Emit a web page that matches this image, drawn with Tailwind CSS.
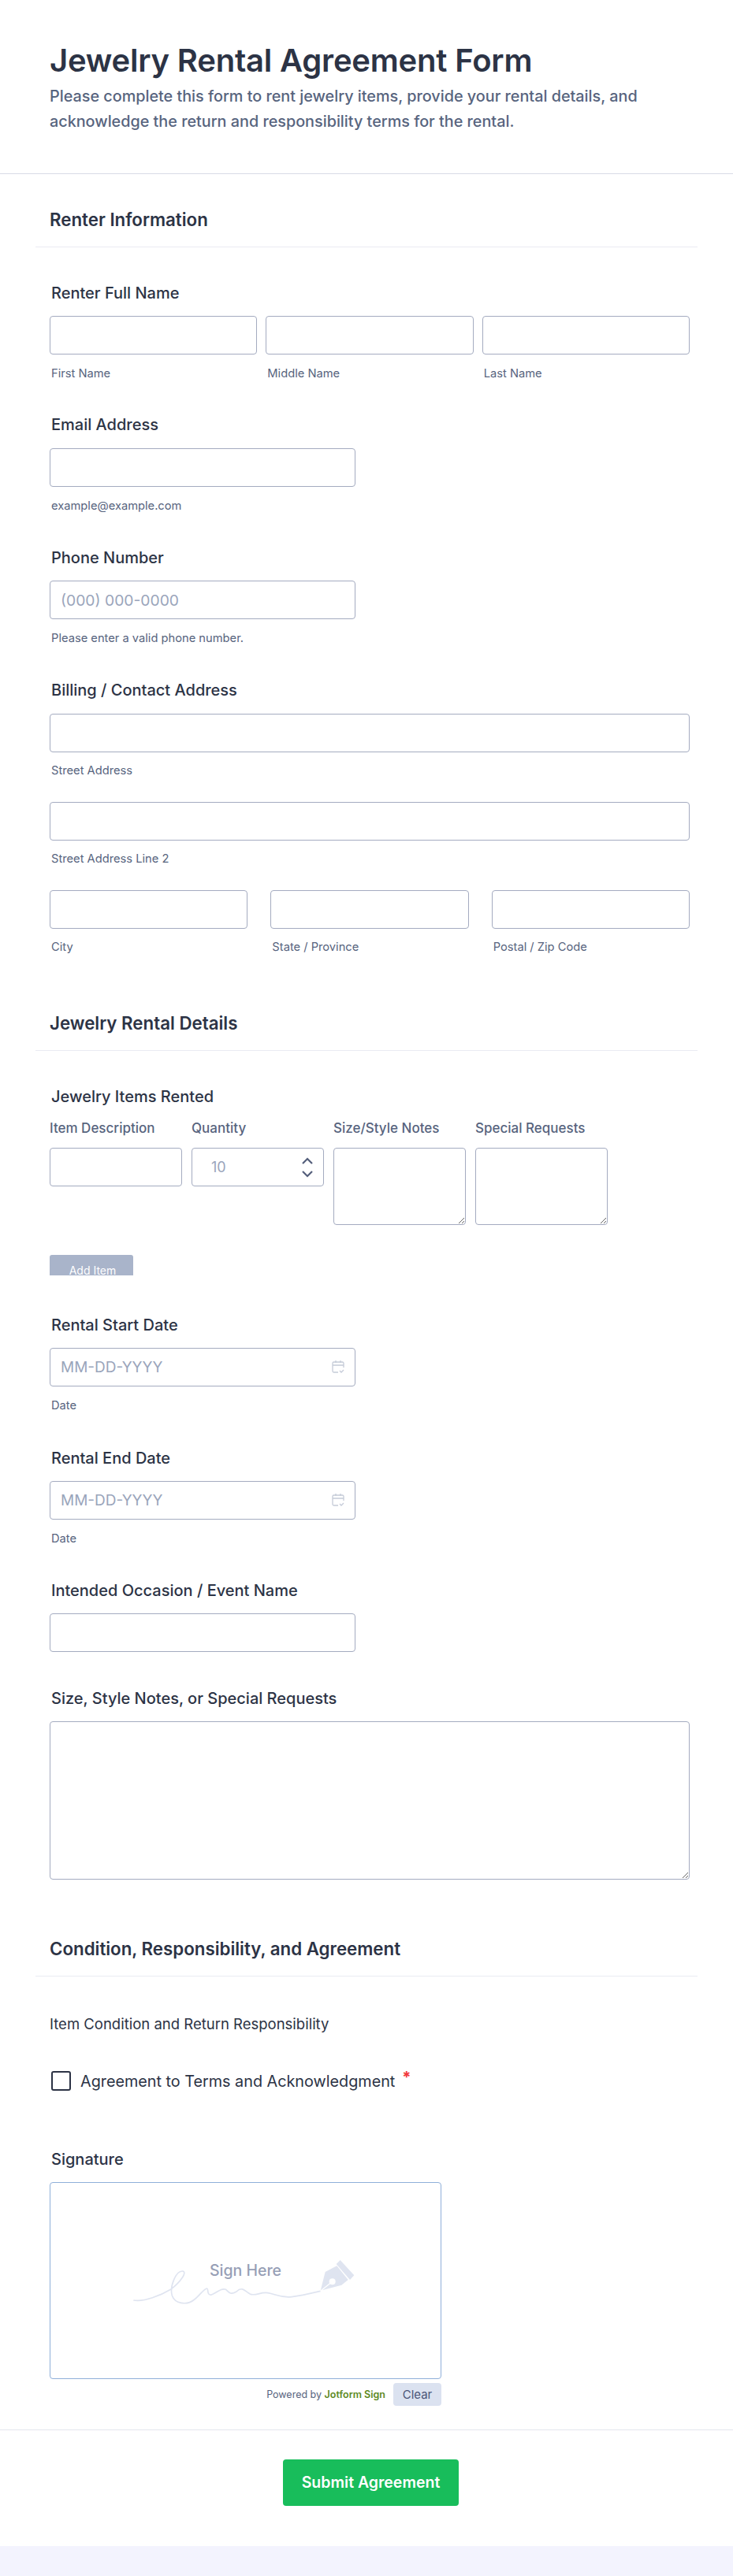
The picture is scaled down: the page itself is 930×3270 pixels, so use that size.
<!doctype html>
<html>
<head>
  <meta charset="UTF-8">
  <meta name="viewport" content="width=device-width, initial-scale=1.0">
  <script src="https://cdn.jsdelivr.net/npm/@tailwindcss/browser@4"></script>
</head>
<body class="bg-[#f3f3fe] font-['Inter',sans-serif] text-[#2c3345]">
  <div class="bg-white w-[930px] h-[3232px] overflow-hidden">

    <!-- form header -->
    <div class="h-[221px] border-b border-[#d8dbe6] pl-[63px] pt-[49px]">
      <h1 class="text-[40px] leading-[56px] font-semibold tracking-[-0.2px]">Jewelry Rental Agreement Form</h1>
      <p class="text-[19.8px] leading-[32px] font-medium text-[#57647e] mt-[1px]">Please complete this form to rent jewelry items, provide your rental details, and<br>acknowledge the return and responsibility terms for the rental.</p>
    </div>

    <!-- renter information -->
    <div class="mx-[45px] mt-[42px] h-[51px] pl-[18px] border-b border-[#eaebf2]">
      <h2 class="text-[22.3px] leading-[32px] font-semibold">Renter Information</h2>
    </div>

    <div class="pl-[63px] w-[875px]">
      <div class="mt-[46px] ml-[2px] text-[20px] leading-[24px] font-medium">Renter Full Name</div>
      <div class="mt-[17px] flex gap-[11px]">
        <div class="flex-1">
          <input class="w-full h-[49px] border border-[#a4abc0] rounded-[4px]">
          <div class="mt-[14px] ml-[2px] text-[14.7px] leading-[20px] text-[#57647e]">First Name</div>
        </div>
        <div class="flex-1">
          <input class="w-full h-[49px] border border-[#a4abc0] rounded-[4px]">
          <div class="mt-[14px] ml-[2px] text-[14.7px] leading-[20px] text-[#57647e]">Middle Name</div>
        </div>
        <div class="flex-1">
          <input class="w-full h-[49px] border border-[#a4abc0] rounded-[4px]">
          <div class="mt-[14px] ml-[2px] text-[14.7px] leading-[20px] text-[#57647e]">Last Name</div>
        </div>
      </div>

      <div class="mt-[43px] ml-[2px] text-[20px] leading-[24px] font-medium">Email Address</div>
      <input class="block mt-[18px] w-[388px] h-[49px] border border-[#a4abc0] rounded-[4px]">
      <div class="mt-[14px] ml-[2px] text-[14.7px] leading-[20px] text-[#57647e]">example@example.com</div>

      <div class="mt-[44px] ml-[2px] text-[20px] leading-[24px] font-medium">Phone Number</div>
      <input class="block mt-[17px] w-[388px] h-[49px] border border-[#a4abc0] rounded-[4px] px-[13px] text-[19.3px] placeholder:text-[#9aa5bb]" placeholder="(000) 000-0000">
      <div class="mt-[14px] ml-[2px] text-[14.7px] leading-[20px] text-[#57647e]">Please enter a valid phone number.</div>

      <div class="mt-[44px] ml-[2px] text-[20px] leading-[24px] font-medium">Billing / Contact Address</div>
      <input class="block mt-[18px] w-full h-[49px] border border-[#a4abc0] rounded-[4px]">
      <div class="mt-[13px] ml-[2px] text-[14.7px] leading-[20px] text-[#57647e]">Street Address</div>
      <input class="block mt-[30px] w-full h-[49px] border border-[#a4abc0] rounded-[4px]">
      <div class="mt-[13px] ml-[2px] text-[14.7px] leading-[20px] text-[#57647e]">Street Address Line 2</div>
      <div class="mt-[30px] flex gap-[29px]">
        <div class="flex-1">
          <input class="w-full h-[49px] border border-[#a4abc0] rounded-[4px]">
          <div class="mt-[13px] ml-[2px] text-[14.7px] leading-[20px] text-[#57647e]">City</div>
        </div>
        <div class="flex-1">
          <input class="w-full h-[49px] border border-[#a4abc0] rounded-[4px]">
          <div class="mt-[13px] ml-[2px] text-[14.7px] leading-[20px] text-[#57647e]">State / Province</div>
        </div>
        <div class="flex-1">
          <input class="w-full h-[49px] border border-[#a4abc0] rounded-[4px]">
          <div class="mt-[13px] ml-[2px] text-[14.7px] leading-[20px] text-[#57647e]">Postal / Zip Code</div>
        </div>
      </div>
    </div>

    <!-- jewelry rental details -->
    <div class="mx-[45px] mt-[71px] h-[51px] pl-[18px] border-b border-[#eaebf2]">
      <h2 class="text-[22.3px] leading-[32px] font-semibold">Jewelry Rental Details</h2>
    </div>

    <div class="pl-[63px] w-[875px]">
      <div class="mt-[46px] ml-[2px] text-[20px] leading-[24px] font-medium">Jewelry Items Rented</div>
      <div class="mt-[16px] flex gap-[12px] items-start">
        <div class="w-[168px]">
          <div class="text-[17px] leading-[24px] font-medium text-[#57647e]">Item Description</div>
          <input class="block mt-[13px] w-full h-[49px] border border-[#a4abc0] rounded-[4px]">
        </div>
        <div class="w-[168px]">
          <div class="text-[17px] leading-[24px] font-medium text-[#57647e]">Quantity</div>
          <div class="relative mt-[13px]">
            <input class="block w-full h-[49px] border border-[#a4abc0] rounded-[4px] pl-[24px] text-[18px] placeholder:text-[#9aa5bb]" placeholder="10">
            <svg class="absolute right-[13px] top-[12px]" width="16" height="26" viewBox="0 0 16 26" fill="none" stroke="#545f7b" stroke-width="2.2">
              <path d="M2 8l6-6 6 6"/>
              <path d="M2 18l6 6 6-6"/>
            </svg>
          </div>
        </div>
        <div class="w-[168px]">
          <div class="text-[17px] leading-[24px] font-medium text-[#57647e]">Size/Style Notes</div>
          <textarea class="block mt-[13px] w-full h-[98px] border border-[#a4abc0] rounded-[4px]"></textarea>
        </div>
        <div class="w-[168px]">
          <div class="text-[17px] leading-[24px] font-medium text-[#57647e]">Special Requests</div>
          <textarea class="block mt-[13px] w-full h-[98px] border border-[#a4abc0] rounded-[4px]"></textarea>
        </div>
      </div>
      <div class="mt-[38px] w-[106px] h-[26px] bg-[#a9b4ca] rounded-t-[3px] text-white text-[14px] leading-[12px] pt-[14px] pl-[3px] text-center">Add Item</div>

      <div class="mt-[51px] ml-[2px] text-[20px] leading-[24px] font-medium">Rental Start Date</div>
      <div class="relative mt-[17px] w-[388px]">
        <input class="block w-full h-[49px] border border-[#a4abc0] rounded-[4px] px-[13px] text-[19px] placeholder:text-[#9aa5bb]" placeholder="MM-DD-YYYY">
        <svg class="absolute right-[13px] top-[15px]" width="18" height="18" viewBox="0 0 18 18" fill="none" stroke="#c5cbd8" stroke-width="1.3">
          <path d="M16 10V4.500a1.500 1.500 0 0 0-1.500-1.500h-11A1.500 1.500 0 0 0 2 4.500v10A1.500 1.500 0 0 0 3.500 16H9"/>
          <path d="M2 7h14M6 1v3M12 1v3"/>
          <path d="M11 14l2 2 3-3"/>
        </svg>
      </div>
      <div class="mt-[14px] ml-[2px] text-[14.7px] leading-[20px] text-[#57647e]">Date</div>

      <div class="mt-[45px] ml-[2px] text-[20px] leading-[24px] font-medium">Rental End Date</div>
      <div class="relative mt-[17px] w-[388px]">
        <input class="block w-full h-[49px] border border-[#a4abc0] rounded-[4px] px-[13px] text-[19px] placeholder:text-[#9aa5bb]" placeholder="MM-DD-YYYY">
        <svg class="absolute right-[13px] top-[15px]" width="18" height="18" viewBox="0 0 18 18" fill="none" stroke="#c5cbd8" stroke-width="1.3">
          <path d="M16 10V4.500a1.500 1.500 0 0 0-1.500-1.500h-11A1.500 1.500 0 0 0 2 4.500v10A1.500 1.500 0 0 0 3.500 16H9"/>
          <path d="M2 7h14M6 1v3M12 1v3"/>
          <path d="M11 14l2 2 3-3"/>
        </svg>
      </div>
      <div class="mt-[14px] ml-[2px] text-[14.7px] leading-[20px] text-[#57647e]">Date</div>

      <div class="mt-[44px] ml-[2px] text-[20px] leading-[24px] font-medium">Intended Occasion / Event Name</div>
      <input class="block mt-[17px] w-[388px] h-[49px] border border-[#a4abc0] rounded-[4px]">

      <div class="mt-[47px] ml-[2px] text-[20px] leading-[24px] font-medium">Size, Style Notes, or Special Requests</div>
      <textarea class="block mt-[17px] w-full h-[201px] border border-[#a4abc0] rounded-[4px]"></textarea>
    </div>

    <!-- condition section -->
    <div class="mx-[45px] mt-[72px] h-[51px] pl-[18px] border-b border-[#eaebf2]">
      <h2 class="text-[22.3px] leading-[32px] font-semibold">Condition, Responsibility, and Agreement</h2>
    </div>

    <div class="pl-[63px] w-[875px]">
      <div class="mt-[48px] text-[18.500px] leading-[24px]">Item Condition and Return Responsibility</div>
      <div class="mt-[48px] ml-[2px] flex items-center gap-[12px]">
        <input type="checkbox" class="appearance-none w-[25px] h-[25px] border-2 border-[#2c3345] rounded-[3px]">
        <span class="text-[19.8px] leading-[24px]">Agreement to Terms and Acknowledgment</span>
        <span class="-ml-[3px] -mt-[10px] text-[20px] leading-[24px] font-bold text-[#f23a3c]">*</span>
      </div>
      <div class="mt-[75px] ml-[2px] text-[20px] leading-[24px] font-medium">Signature</div>
      <div class="relative mt-[17px] w-[497px] h-[250px] border border-[#8fafd9] rounded-[4px]">
        <div class="absolute left-0 right-0 top-[99px] text-center text-[19.500px] leading-[24px] font-medium text-[#979fb6]">Sign Here</div>
        <svg class="absolute left-[76px] top-[48px]" width="440" height="240" viewBox="0 0 1320 720" fill="none">
          <path d="M88 303C130 310 190 285 232 260C265 235 295 195 275 192C250 190 225 250 235 285C245 315 290 325 320 300C340 285 355 260 368 258C375 260 365 285 385 282C405 275 420 255 440 262C450 270 455 285 480 270C500 250 510 265 530 278C550 290 570 270 600 275C630 280 650 295 690 290C730 285 770 275 800 268" stroke="#dfe4f0" stroke-width="5"/>
          <path d="M800 266L818 195L862 172L905 225L880 245Z" fill="#dfe4f0"/>
          <path d="M875 150L928 208L912 225L860 165Z" fill="#dfe4f0"/>
          <circle cx="845" cy="232" r="12" fill="#fff"/>
          <path d="M800 268L845 232" stroke="#fff" stroke-width="4"/>
        </svg>
      </div>
      <div class="w-[497px] mt-[5px] flex items-center justify-end gap-[10px]">
        <span class="text-[12.500px] leading-[16px] text-[#57647e]">Powered by <span class="font-semibold text-[#5e8a1f]">Jotform Sign</span></span>
        <span class="w-[61px] h-[29px] rounded-[4px] bg-[#dbe2f0] text-[#4a5577] text-[15px] leading-[29px] text-center">Clear</span>
      </div>
    </div>

    <!-- submit -->
    <div class="mt-[30px] border-t border-[#e3e6ee] pt-[37px] pl-[11px] flex justify-center">
      <div class="w-[223px] h-[59px] bg-[#18bd5b] rounded-[4px] text-white text-[19.500px] font-semibold leading-[59px] text-center">Submit Agreement</div>
    </div>
  </div>
</body>
</html>
